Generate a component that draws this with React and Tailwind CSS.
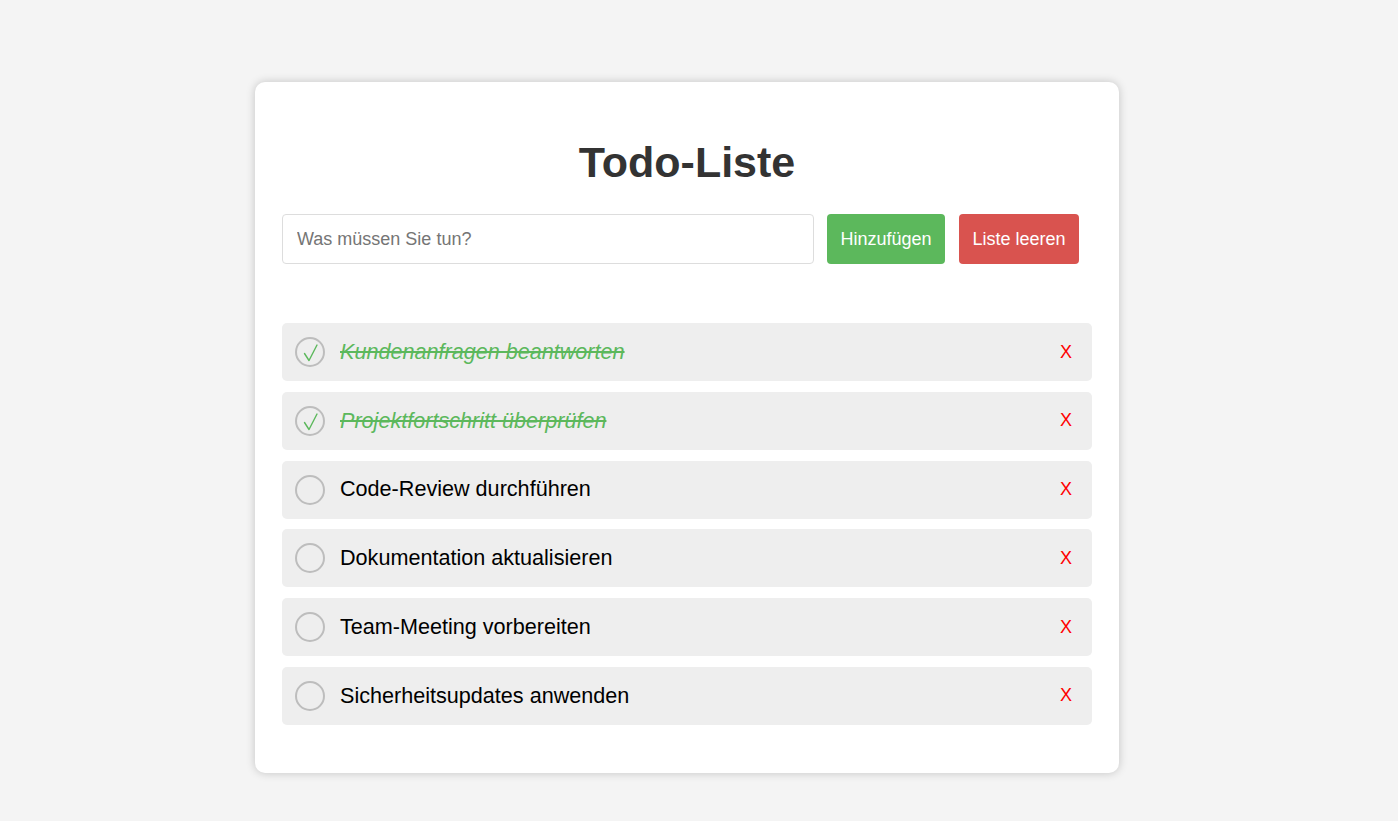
import React from "react";

const todos = [
  { text: "Kundenanfragen beantworten", done: true },
  { text: "Projektfortschritt überprüfen", done: true },
  { text: "Code-Review durchführen", done: false },
  { text: "Dokumentation aktualisieren", done: false },
  { text: "Team-Meeting vorbereiten", done: false },
  { text: "Sicherheitsupdates anwenden", done: false },
];

function Circle({ done }) {
  return (
    <div className="relative w-[30px] h-[30px] rounded-full border-2 border-[#bdbdbd] shrink-0">
      {done && (
        <svg
          className="absolute left-[-2px] top-[-2px]"
          width="30"
          height="30"
          viewBox="0 0 30 30"
          fill="none"
        >
          <polyline
            points="9.5,16.5 14,23.5 22,8"
            stroke="#5cb85c"
            strokeWidth="1.4"
            strokeLinecap="round"
            strokeLinejoin="round"
          />
        </svg>
      )}
    </div>
  );
}

export default function App() {
  return (
    <div
      className="min-h-screen bg-[#f4f4f4] pt-[82px] pb-[49px] flex justify-center pr-[24px]"
      style={{ fontFamily: '"Liberation Sans", Arial, sans-serif' }}
    >
      <div className="w-[864px] bg-white rounded-[10px] shadow-[0_0_10px_rgba(0,0,0,0.2)] px-[27px] pt-[55px] pb-[48px]">
        <h1 className="text-center text-[43px] leading-[50px] font-bold text-[#333333]">
          Todo-Liste
        </h1>
        <div className="flex items-center mt-[27px] h-[50px]">
          <input
            className="w-[532px] h-[50px] border border-[#dddddd] rounded-[4px] pl-[14px] text-[18px] text-[#333] placeholder:text-[#757575] outline-none"
            placeholder="Was müssen Sie tun?"
          />
          <button className="ml-[13px] w-[118px] h-[50px] rounded-[4px] bg-[#5cb85c] text-white text-[18px]">
            Hinzufügen
          </button>
          <button className="ml-[14px] w-[120px] h-[50px] rounded-[4px] bg-[#d9534f] text-white text-[18px]">
            Liste leeren
          </button>
        </div>
        <ul className="mt-[59px] flex flex-col gap-[10.8px]">
          {todos.map((t, i) => (
            <li
              key={i}
              className="h-[58px] bg-[#eeeeee] rounded-[5px] flex items-center pl-[13px] pr-[20px]"
            >
              <Circle done={t.done} />
              <span
                className={
                  "ml-[15px] text-[21.6px] flex-1 " +
                  (t.done
                    ? "italic line-through text-[#5cb85c]"
                    : "text-black")
                }
              >
                {t.text}
              </span>
              <span className="text-[18px] text-[#ff0000]">X</span>
            </li>
          ))}
        </ul>
      </div>
    </div>
  );
}
